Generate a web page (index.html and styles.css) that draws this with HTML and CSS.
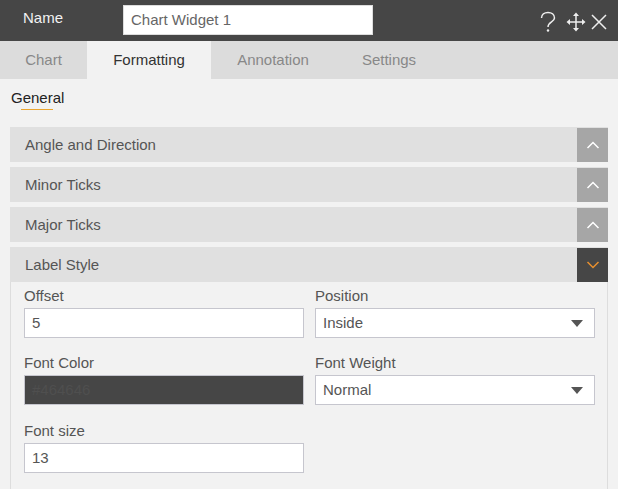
FILE: index.html
```html
<!DOCTYPE html>
<html>
    <head>
        <title>Chart Widget</title>
        <link rel="stylesheet" href="styles.css">
    </head>
    <body>
        <div class="header">
            <span class="header-label">Name</span>
            <input type="text" class="name-input" value="Chart Widget 1" readonly>
            <div class="header-icons">
                <svg width="16" height="22" viewBox="0 0 16 22"><path d="M1.500 7C1.500 3.500 4.500 1.500 8 1.500S14.500 3.500 14.500 7C14.500 11 8 11 8 16" fill="none" stroke="#eee" stroke-width="1.500"/><circle cx="8" cy="19.500" r="1.200" fill="#eee"/></svg>
                <svg width="20" height="20" viewBox="0 0 20 20"><path d="M10 2V18M2 10H18" fill="none" stroke="#eee" stroke-width="1.500"/><path d="M10 .5L13 4H7ZM10 19.500L7 16H13ZM.5 10L4 7V13ZM19.500 10L16 13V7Z" fill="#eee"/></svg>
                <svg width="16" height="16" viewBox="0 0 16 16"><path d="M1 1L15 15M15 1L1 15" fill="none" stroke="#eee" stroke-width="1.500"/></svg>
            </div>
        </div>
        <div class="tabs">
            <div class="tab">Chart</div>
            <div class="tab active">Formatting</div>
            <div class="tab">Annotation</div>
            <div class="tab">Settings</div>
        </div>
        <div class="content">
            <div class="subtab">General</div>

            <div class="section">
                <span>Angle and Direction</span>
                <div class="toggle">
                    <svg width="14" height="8" viewBox="0 0 14 8"><path d="M1.500 7L7 1.500L12.500 7" fill="none" stroke="#fff" stroke-width="1.500"/></svg>
                </div>
            </div>
            <div class="section">
                <span>Minor Ticks</span>
                <div class="toggle">
                    <svg width="14" height="8" viewBox="0 0 14 8"><path d="M1.500 7L7 1.500L12.500 7" fill="none" stroke="#fff" stroke-width="1.500"/></svg>
                </div>
            </div>
            <div class="section">
                <span>Major Ticks</span>
                <div class="toggle">
                    <svg width="14" height="8" viewBox="0 0 14 8"><path d="M1.500 7L7 1.500L12.500 7" fill="none" stroke="#fff" stroke-width="1.500"/></svg>
                </div>
            </div>
            <div class="section open">
                <span>Label Style</span>
                <div class="toggle">
                    <svg width="14" height="8" viewBox="0 0 14 8"><path d="M1.500 1L7 6.500L12.500 1" fill="none" stroke="#e8902f" stroke-width="1.500"/></svg>
                </div>
            </div>
            <div class="panel">
                <div class="field">
                    <label>Offset</label>
                    <div class="box">5</div>
                </div>
                <div class="field">
                    <label>Position</label>
                    <div class="box select">Inside<i class="arrow"></i></div>
                </div>
                <div class="field">
                    <label>Font Color</label>
                    <div class="box color">#464646</div>
                </div>
                <div class="field">
                    <label>Font Weight</label>
                    <div class="box select">Normal<i class="arrow"></i></div>
                </div>
                <div class="field last">
                    <label>Font size</label>
                    <div class="box">13</div>
                </div>
            </div>
        </div>
    </body>
</html>
```

FILE: styles.css
```css
html, body {
    height: 100%;
}

body {
    margin: 0;
    overflow: hidden;
    background-color: #f2f2f2;
    font-family: "Liberation Sans", Arial, sans-serif;
    font-size: 15px;
    color: #555;
}

.header {
    display: flex;
    align-items: center;
    height: 41px;
    background-color: #464646;
}

.header-label {
    width: 123px;
    padding-left: 23px;
    padding-bottom: 6px;
    box-sizing: border-box;
    color: #f2f2f2;
}

.name-input {
    width: 250px;
    height: 30px;
    margin-bottom: 2px;
    padding: 0 7px;
    box-sizing: border-box;
    border: 1px solid #ddd;
    background-color: #fff;
    font-family: inherit;
    font-size: 15px;
    color: #666;
    outline: none;
}

.header-icons {
    display: flex;
    align-items: center;
    gap: 10px;
    margin-left: auto;
    margin-right: 11px;
    margin-top: 2px;
}

.header-icons svg:last-child {
    margin-left: -5px;
}

.tabs {
    display: flex;
    height: 38px;
    background-color: #dcdcdc;
}

.tab {
    display: flex;
    align-items: center;
    justify-content: center;
    width: 124px;
    padding-bottom: 1px;
    box-sizing: border-box;
    color: #888;
}

.tab:first-child {
    width: 87px;
}

.tab:nth-child(4) {
    width: 100px;
    margin-left: 4px;
}

.tab.active {
    background-color: #f2f2f2;
    color: #333;
}

.content {
    padding: 0 10px;
}

.subtab {
    position: relative;
    height: 48px;
    padding-top: 10px;
    padding-left: 1px;
    box-sizing: border-box;
    color: #222;
}

.subtab::after {
    content: "";
    position: absolute;
    left: 11px;
    top: 30px;
    width: 32px;
    height: 1px;
    background-color: #eaa52f;
}

.section {
    display: flex;
    align-items: center;
    justify-content: space-between;
    height: 35px;
    margin-bottom: 5px;
    padding-left: 15px;
    background-color: #e0e0e0;
    color: #555;
}

.toggle {
    display: flex;
    align-items: center;
    justify-content: center;
    width: 31px;
    height: 34px;
    background-color: #a6a6a6;
}

.section.open {
    margin-bottom: 0;
}

.section.open .toggle {
    background-color: #464646;
}

.panel {
    display: grid;
    grid-template-columns: 280px 280px;
    column-gap: 11px;
    align-content: start;
    row-gap: 16px;
    height: 207px;
    padding: 5px 13px 0;
    border-left: 1px solid #ddd;
    border-right: 1px solid #ddd;
    box-sizing: border-box;
}

.field.last {
    margin-top: 1px;
}

.field label {
    display: block;
    height: 21px;
    line-height: 18px;
    color: #555;
}

.box {
    position: relative;
    height: 30px;
    padding-left: 7px;
    box-sizing: border-box;
    border: 1px solid #c6c6ce;
    background-color: #fff;
    line-height: 28px;
    color: #555;
}

.box.color {
    background-color: #464646;
    color: #4f4f4f;
}

.arrow {
    position: absolute;
    right: 11px;
    top: 11px;
    border-left: 6.500px solid transparent;
    border-right: 6.500px solid transparent;
    border-top: 7px solid #555;
}
```
